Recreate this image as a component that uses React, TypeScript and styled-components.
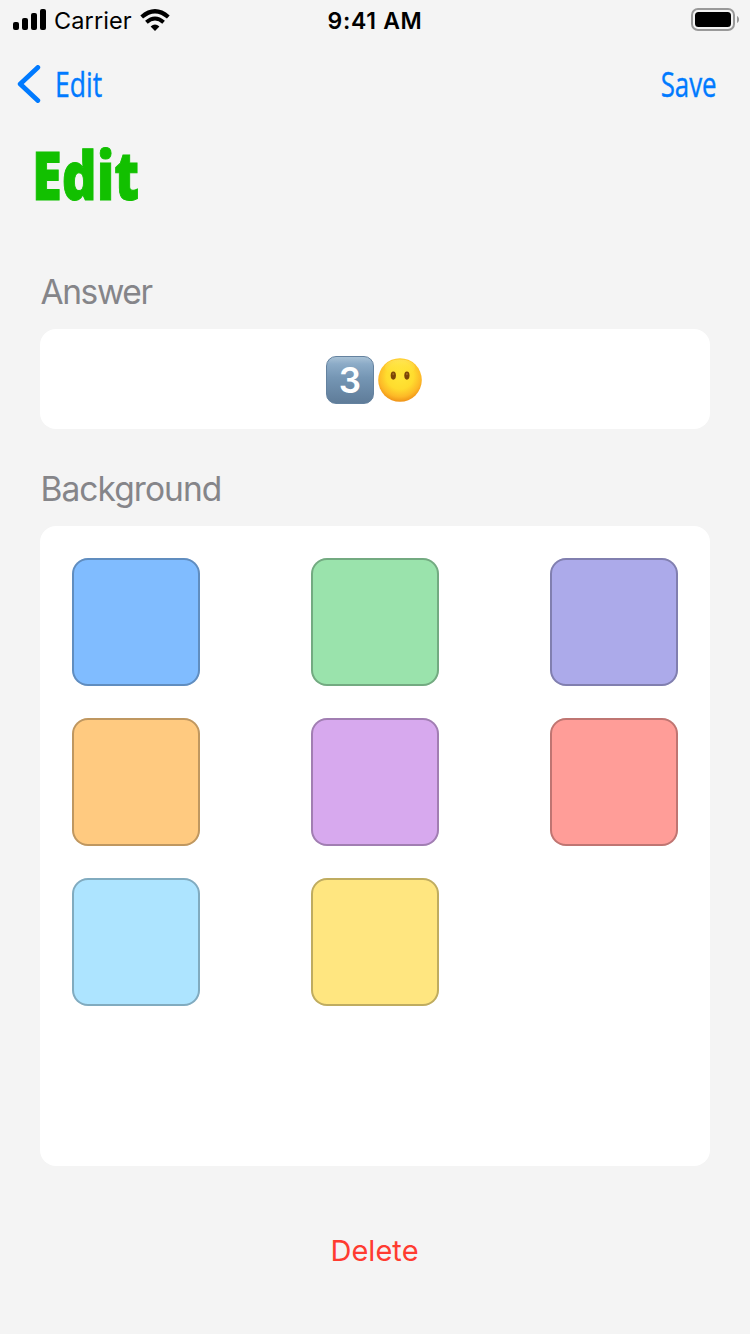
import React from "react";
import styled, { createGlobalStyle } from "styled-components";

const GlobalStyle = createGlobalStyle`
  *, *::before, *::after { box-sizing: border-box; }
  body { margin: 0; background: #f4f4f4; }
  button { border: 0; padding: 0; background: none; cursor: pointer; font: inherit; }
  svg { display: block; flex: none; }
`;

const system = `Inter, "Liberation Sans", sans-serif`;
const condensed = `"Open Sans", "Noto Sans", sans-serif`;

const Screen = styled.main`
  width: 750px;
  height: 1334px;
  display: flex;
  flex-direction: column;
  overflow: hidden;
  background: #f4f4f4;
  font-family: ${system};
`;

const StatusBar = styled.header`
  height: 40px;
  padding: 0 11px 0 13px;
  display: grid;
  grid-template-columns: 1fr auto 1fr;
  align-items: center;
  color: #000;
  font-size: 23.5px;
  line-height: 42px;
`;

const Signal = styled.div`
  display: flex;
  align-items: center;
`;

const Carrier = styled.span`
  width: 78px;
  margin: 0 8px 0 7px;
  letter-spacing: 0.1px;
  white-space: nowrap;
`;

const Clock = styled.time`
  margin-right: 2px;
  font-weight: 600;
  font-size: 23px;
  letter-spacing: 0.7px;
`;

const Power = styled.div`
  display: flex;
  justify-content: flex-end;
`;

const NavBar = styled.nav`
  height: 88px;
  padding: 0 33px 0 17px;
  display: flex;
  align-items: center;
  justify-content: space-between;
`;

const NavButton = styled.button`
  display: flex;
  align-items: center;
  gap: 14px;
  color: #007aff;
`;

const NavText = styled.span<{ $from: "left" | "right"; $squeeze: number }>`
  font-family: ${condensed};
  font-size: 34px;
  font-weight: 500;
  line-height: 86px;
  -webkit-text-stroke: 0.4px #007aff;
  transform: scaleX(${(p) => p.$squeeze});
  transform-origin: ${(p) => p.$from} center;
`;

const Title = styled.h1`
  align-self: flex-start;
  margin: 0 0 0 32px;
  font-family: ${condensed};
  font-size: 67px;
  font-weight: 800;
  line-height: 92px;
  color: #12c000;
  -webkit-text-stroke: 1px #12c000;
  transform: scaleX(0.81);
  transform-origin: left center;
`;

const SectionTitle = styled.h2<{ $top: number; $tracking: number }>`
  margin: ${(p) => p.$top}px 0 17px 40.5px;
  font-size: 33.5px;
  font-weight: 400;
  line-height: 40px;
  letter-spacing: ${(p) => p.$tracking}px;
  color: #858589;
`;

const Card = styled.section`
  margin: 0 40px;
  border-radius: 16px;
  background: #fff;
`;

const AnswerCard = styled(Card)`
  height: 100px;
  display: flex;
  align-items: center;
  justify-content: center;
  gap: 4px;
  padding: 2px 2px 0 0;
`;

const Keycap = styled.span`
  width: 48px;
  height: 48px;
  border-radius: 10px;
  border: 1px solid #64829f;
  background: linear-gradient(#a9c2d6 0, #8cabc7 7px, #7596b4 45%, #5f7c99 100%);
  color: #fff;
  font-size: 35px;
  font-weight: 600;
  line-height: 46px;
  text-align: center;
`;

const SwatchCard = styled(Card)`
  height: 640px;
  padding: 32px;
  display: grid;
  grid-template-columns: repeat(3, 128px);
  grid-auto-rows: 128px;
  justify-content: space-between;
  align-content: start;
  row-gap: 32px;
`;

const Swatch = styled.button<{ $color: string }>`
  border-radius: 16px;
  background: ${(p) => p.$color};
  box-shadow: inset 0 0 0 2px rgba(0, 0, 0, 0.25);
`;

const DeleteButton = styled.button`
  align-self: center;
  margin: 65px 1px 0 0;
  color: #ff3b30;
  font-size: 29px;
  line-height: 40px;
  letter-spacing: 0.05px;
`;

const swatches = [
  { name: "Blue", color: "#80bcff" },
  { name: "Green", color: "#9ae3ac" },
  { name: "Indigo", color: "#acaaea" },
  { name: "Orange", color: "#ffca80" },
  { name: "Purple", color: "#d7a9ee" },
  { name: "Red", color: "#ff9d98" },
  { name: "Teal", color: "#ade4ff" },
  { name: "Yellow", color: "#ffe680" },
];

const SignalBars = () => (
  <svg width="34" height="24" viewBox="0 0 34 24">
    <rect x="0" y="13" width="6" height="8" rx="2" />
    <rect x="9" y="9" width="6" height="12" rx="2" />
    <rect x="18" y="4" width="6" height="17" rx="2" />
    <rect x="27" y="0" width="6" height="21" rx="2" />
  </svg>
);

const Wifi = () => (
  <svg width="30" height="24" viewBox="0 0 30 24" fill="none" stroke="#000">
    <path d="M1.7 8 Q15 -3.4 28.3 8" strokeWidth="4.2" />
    <path d="M6.4 13.2 Q15 5.8 23.6 13.2" strokeWidth="4" />
    <path d="M10.6 17.4 Q15 13.4 19.4 17.4 L15 22 Z" fill="#000" stroke="none" />
  </svg>
);

const Battery = () => (
  <svg width="48" height="26" viewBox="0 0 48 26">
    <rect x="1" y="1" width="42" height="21" rx="6" fill="none" stroke="#999" strokeWidth="2" />
    <rect x="4" y="4" width="36" height="15" rx="3.5" />
    <path d="M46 8 C48.7 9 48.7 14 46 15 Z" fill="#999" />
  </svg>
);

const Chevron = () => (
  <svg width="24" height="38" viewBox="0 0 24 38" fill="none" stroke="#007aff">
    <path d="M20.8 2.5 L3.2 19 L20.8 35.5" strokeWidth="4.8" strokeLinecap="round" strokeLinejoin="round" />
  </svg>
);

const BlankFace = () => (
  <svg width="44" height="44" viewBox="0 0 44 44">
    <defs>
      <radialGradient id="skin" cx="0.5" cy="0.4" r="0.62">
        <stop offset="0" stopColor="#ffe637" />
        <stop offset="0.5" stopColor="#ffdc2e" />
        <stop offset="0.78" stopColor="#fdb927" />
        <stop offset="1" stopColor="#ed8c15" />
      </radialGradient>
      <linearGradient id="shine" x1="0" y1="0" x2="0" y2="1">
        <stop offset="0" stopColor="#fff27a" stopOpacity="0.5" />
        <stop offset="1" stopColor="#ffe637" stopOpacity="0" />
      </linearGradient>
    </defs>
    <circle cx="22" cy="22" r="21.8" fill="url(#skin)" />
    <ellipse cx="22" cy="9.5" rx="15" ry="8" fill="url(#shine)" />
    <ellipse cx="15.3" cy="17.6" rx="2.6" ry="4.1" fill="#7b4506" />
    <ellipse cx="28.9" cy="17.6" rx="2.6" ry="4.1" fill="#7b4506" />
    <ellipse cx="15.3" cy="16" rx="1" ry="1.2" fill="#a06a1c" />
    <ellipse cx="28.9" cy="16" rx="1" ry="1.2" fill="#a06a1c" />
  </svg>
);

export default function App() {
  return (
    <Screen>
      <GlobalStyle />
      <StatusBar>
        <Signal>
          <SignalBars />
          <Carrier>Carrier</Carrier>
          <Wifi />
        </Signal>
        <Clock>9:41 AM</Clock>
        <Power>
          <Battery />
        </Power>
      </StatusBar>
      <NavBar>
        <NavButton>
          <Chevron />
          <NavText $from="left" $squeeze={0.78}>Edit</NavText>
        </NavButton>
        <NavButton>
          <NavText $from="right" $squeeze={0.76}>Save</NavText>
        </NavButton>
      </NavBar>
      <Title>Edit</Title>
      <SectionTitle $top={52} $tracking={-1.4}>Answer</SectionTitle>
      <AnswerCard>
        <Keycap>3</Keycap>
        <BlankFace />
      </AnswerCard>
      <SectionTitle $top={40} $tracking={-0.95}>Background</SectionTitle>
      <SwatchCard>
        {swatches.map((s) => (
          <Swatch key={s.name} $color={s.color} aria-label={s.name} />
        ))}
      </SwatchCard>
      <DeleteButton>Delete</DeleteButton>
    </Screen>
  );
}
